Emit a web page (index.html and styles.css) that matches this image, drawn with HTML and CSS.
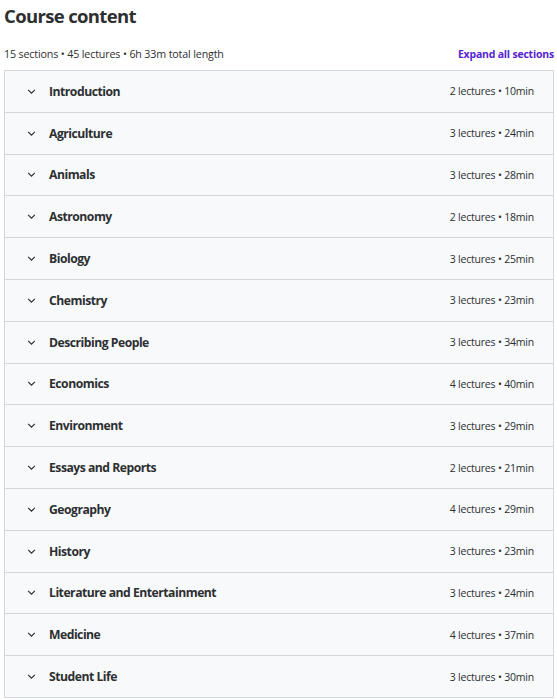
FILE: index.html
```html
<!DOCTYPE html>
<html lang="en">
<head>
<meta charset="utf-8">
<title>Course content</title>
<link rel="stylesheet" href="styles.css">
</head>
<body>
<div class="page">
  <h2 class="title">Course content</h2>
  <div class="meta">
    <span class="summary">15 sections • 45 lectures • 6h 33m total length</span>
    <button class="expand">Expand all sections</button>
  </div>
  <div class="sections">
    <div class="row"><span class="chev"><svg viewBox="0 0 10 6" width="9" height="5"><path d="M1 1l4 4 4-4" fill="none" stroke="#2d2f31" stroke-width="1.4"/></svg></span><span class="name">Introduction</span><span class="info">2 lectures • 10min</span></div>
    <div class="row"><span class="chev"><svg viewBox="0 0 10 6" width="9" height="5"><path d="M1 1l4 4 4-4" fill="none" stroke="#2d2f31" stroke-width="1.4"/></svg></span><span class="name">Agriculture</span><span class="info">3 lectures • 24min</span></div>
    <div class="row"><span class="chev"><svg viewBox="0 0 10 6" width="9" height="5"><path d="M1 1l4 4 4-4" fill="none" stroke="#2d2f31" stroke-width="1.4"/></svg></span><span class="name">Animals</span><span class="info">3 lectures • 28min</span></div>
    <div class="row"><span class="chev"><svg viewBox="0 0 10 6" width="9" height="5"><path d="M1 1l4 4 4-4" fill="none" stroke="#2d2f31" stroke-width="1.4"/></svg></span><span class="name">Astronomy</span><span class="info">2 lectures • 18min</span></div>
    <div class="row"><span class="chev"><svg viewBox="0 0 10 6" width="9" height="5"><path d="M1 1l4 4 4-4" fill="none" stroke="#2d2f31" stroke-width="1.4"/></svg></span><span class="name">Biology</span><span class="info">3 lectures • 25min</span></div>
    <div class="row"><span class="chev"><svg viewBox="0 0 10 6" width="9" height="5"><path d="M1 1l4 4 4-4" fill="none" stroke="#2d2f31" stroke-width="1.4"/></svg></span><span class="name">Chemistry</span><span class="info">3 lectures • 23min</span></div>
    <div class="row"><span class="chev"><svg viewBox="0 0 10 6" width="9" height="5"><path d="M1 1l4 4 4-4" fill="none" stroke="#2d2f31" stroke-width="1.4"/></svg></span><span class="name">Describing People</span><span class="info">3 lectures • 34min</span></div>
    <div class="row"><span class="chev"><svg viewBox="0 0 10 6" width="9" height="5"><path d="M1 1l4 4 4-4" fill="none" stroke="#2d2f31" stroke-width="1.4"/></svg></span><span class="name">Economics</span><span class="info">4 lectures • 40min</span></div>
    <div class="row"><span class="chev"><svg viewBox="0 0 10 6" width="9" height="5"><path d="M1 1l4 4 4-4" fill="none" stroke="#2d2f31" stroke-width="1.4"/></svg></span><span class="name">Environment</span><span class="info">3 lectures • 29min</span></div>
    <div class="row"><span class="chev"><svg viewBox="0 0 10 6" width="9" height="5"><path d="M1 1l4 4 4-4" fill="none" stroke="#2d2f31" stroke-width="1.4"/></svg></span><span class="name">Essays and Reports</span><span class="info">2 lectures • 21min</span></div>
    <div class="row"><span class="chev"><svg viewBox="0 0 10 6" width="9" height="5"><path d="M1 1l4 4 4-4" fill="none" stroke="#2d2f31" stroke-width="1.4"/></svg></span><span class="name">Geography</span><span class="info">4 lectures • 29min</span></div>
    <div class="row"><span class="chev"><svg viewBox="0 0 10 6" width="9" height="5"><path d="M1 1l4 4 4-4" fill="none" stroke="#2d2f31" stroke-width="1.4"/></svg></span><span class="name">History</span><span class="info">3 lectures • 23min</span></div>
    <div class="row"><span class="chev"><svg viewBox="0 0 10 6" width="9" height="5"><path d="M1 1l4 4 4-4" fill="none" stroke="#2d2f31" stroke-width="1.4"/></svg></span><span class="name">Literature and Entertainment</span><span class="info">3 lectures • 24min</span></div>
    <div class="row"><span class="chev"><svg viewBox="0 0 10 6" width="9" height="5"><path d="M1 1l4 4 4-4" fill="none" stroke="#2d2f31" stroke-width="1.4"/></svg></span><span class="name">Medicine</span><span class="info">4 lectures • 37min</span></div>
    <div class="row"><span class="chev"><svg viewBox="0 0 10 6" width="9" height="5"><path d="M1 1l4 4 4-4" fill="none" stroke="#2d2f31" stroke-width="1.4"/></svg></span><span class="name">Student Life</span><span class="info">3 lectures • 30min</span></div>
  </div>
</div>
</body>
</html>
```
FILE: styles.css
```css
* { box-sizing: border-box; }
html, body { margin: 0; padding: 0; background: #fff; }
body {
  font-family: "Open Sans", "Noto Sans", sans-serif;
  color: #2d2f31;
}
.page {
  padding: 0 3px 0 4px;
}
.title {
  margin: 0;
  padding-top: 3px;
  font-size: 18.5px;
  font-weight: 700;
  line-height: 26px;
  letter-spacing: -0.65px;
}
.meta {
  display: flex;
  justify-content: space-between;
  align-items: center;
  margin-top: 16px;
  height: 18px;
  margin-bottom: 7px;
}
.summary {
  font-size: 10.7px;
  letter-spacing: -0.15px;
}
.expand {
  border: 0;
  background: none;
  padding: 0;
  font-family: inherit;
  font-size: 10.5px;
  font-weight: 700;
  color: #5624d0;
  letter-spacing: -0.2px;
}
.sections {
  border: 1px solid #d1d7dc;
  border-bottom: 0;
}
.row {
  display: flex;
  align-items: center;
  height: 41.8px;
  padding: 0 19px 0 22px;
  background: #f7f9fa;
  border-bottom: 1px solid #d1d7dc;
}
.chev {
  display: flex;
  width: 22px;
  align-items: center;
}
.name {
  flex: 1;
  font-size: 12.2px;
  font-weight: 700;
  letter-spacing: -0.5px;
}
.info {
  font-size: 10.5px;
  letter-spacing: -0.2px;
}
```
